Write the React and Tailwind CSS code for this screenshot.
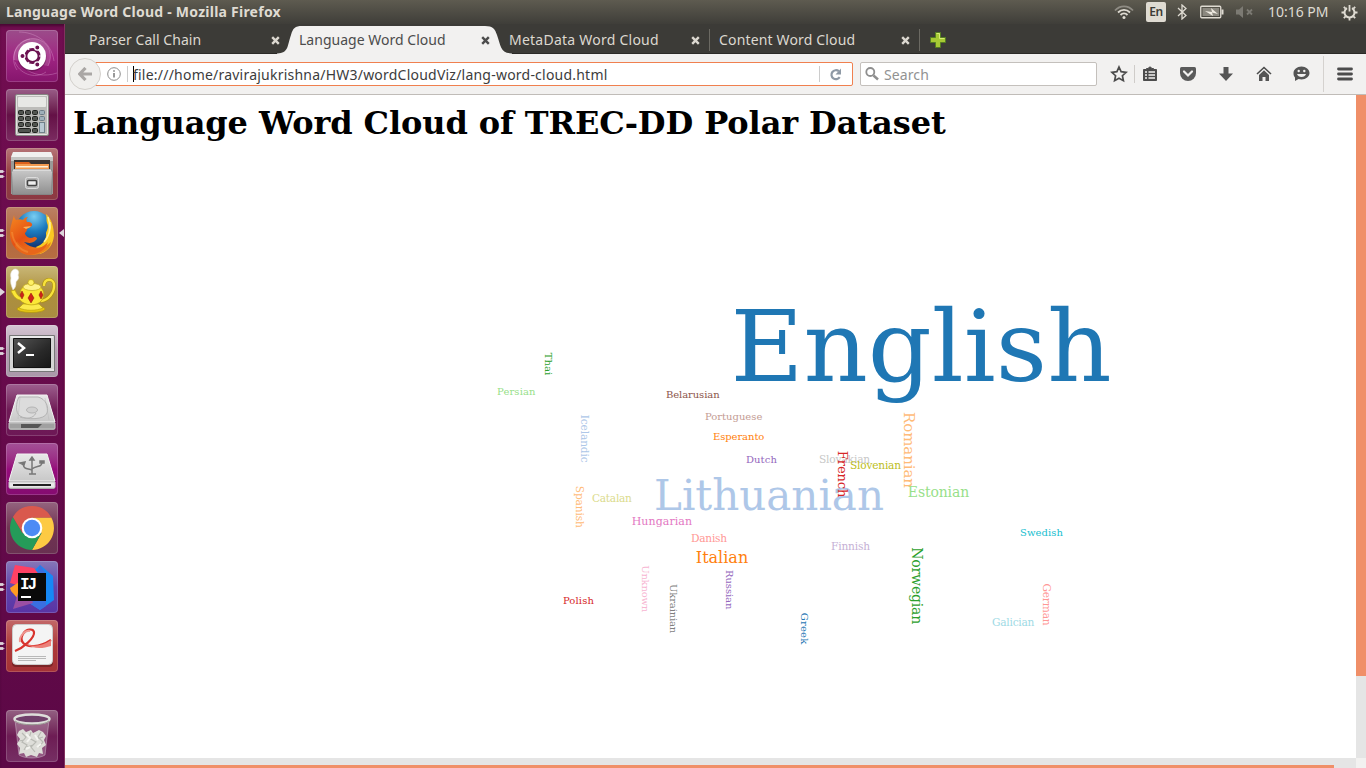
import React from "react";

const words = [
  ["English", 921, 381, 100, "#1f77b4"],
  ["Lithuanian", 769, 510, 42, "#aec7e8"],
  ["Italian", 722, 563, 16, "#ff7f0e"],
];

// text, start x, baseline y, length, size, colour
const flat = [
  ["Estonian", 907.8, 497, 61.4, 14, "#98df8a"],
  ["Hungarian", 631.7, 525, 60.4, 11, "#e377c2"],
  ["Persian", 497, 395, 38.5, 10, "#98df8a"],
  ["Belarusian", 665.9, 398, 53.7, 10, "#8c564b"],
  ["Portuguese", 705, 420, 57.3, 10, "#c49c94"],
  ["Esperanto", 712.9, 440, 51.5, 10, "#ff7f0e"],
  ["Dutch", 745.9, 463, 31, 10, "#9467bd"],
  ["Slovakian", 818.9, 463, 51.3, 10.6, "#c7c7c7"],
  ["Slovenian", 850, 469, 51, 10.6, "#bcbd22"],
  ["Catalan", 591.9, 502, 40, 10.6, "#dbdb8d"],
  ["Danish", 690.9, 542, 36.2, 10.6, "#ff9896"],
  ["Finnish", 831, 550, 39, 10.6, "#c5b0d5"],
  ["Swedish", 1020, 536, 43, 10, "#17becf"],
  ["Galician", 992, 626, 42.4, 10.6, "#9edae5"],
  ["Polish", 562.9, 604, 31, 10, "#d62728"],
];

// text, baseline x, start y, length, size, colour
const turned = [
  ["Norwegian", 912, 547.3, 77, 14, "#2ca02c"],
  ["Romanian", 904, 412, 76, 15, "#ffbb78"],
  ["French", 838, 450.8, 46.6, 13, "#d62728"],
  ["Thai", 545, 352.8, 22.4, 10, "#2ca02c"],
  ["Icelandic", 581, 414.7, 48, 10.6, "#aec7e8"],
  ["Spanish", 576, 485.8, 42, 10.6, "#ffbb78"],
  ["Unknown", 642, 565.2, 47, 10, "#f7b6d2"],
  ["Ukrainian", 670, 584, 49.3, 10, "#7f7f7f"],
  ["Russian", 726, 570, 39.4, 10, "#9467bd"],
  ["Greek", 801, 612.8, 31.4, 10, "#1f77b4"],
  ["German", 1043, 583.4, 42.3, 10.6, "#ff9896"],
];

function WordCloud() {
  return (
    <svg viewBox="65 142 1291 616" width="1291" height="616" className="block shrink-0" fontFamily="'DejaVu Serif', serif">
      {words.map(([t, x, y, s, c]) => (
        <text key={t} x={x} y={y} fontSize={s} fill={c} textAnchor="middle">{t}</text>
      ))}
      {flat.map(([t, x, y, l, s, c]) => (
        <text key={t} x={x} y={y} fontSize={s} fill={c} textLength={l}>{t}</text>
      ))}
      {turned.map(([t, x, y, l, s, c]) => (
        <text key={t} transform={`translate(${x},${y}) rotate(90)`} fontSize={s} fill={c} textLength={l}>{t}</text>
      ))}
    </svg>
  );
}

const Svg = ({ w, h, children, className = "" }) => (
  <svg width={w} height={h} viewBox={`0 0 ${w} ${h}`} className={`block shrink-0 ${className}`} fill="none">{children}</svg>
);

function DashArt() {
  return (
    <Svg w={52} h={52}>
      <path d="M8 30C6 14 22 5 34 10c10 4 13 16 8 26" fill="#fff" fillOpacity=".14" stroke="#e6a8d8" strokeOpacity=".35" />
      <path d="M11 40C3 28 10 12 24 9M40 42c-12 8-27 1-31-10M13 2c14 0 32 8 35 29M51 43c-12 4-25 2-32-5" stroke="#f0b8e4" strokeOpacity=".3" />
      <circle cx="26" cy="27" r="14.500" fill="#400830" fillOpacity=".35" />
      <circle cx="26" cy="26" r="14" fill="#fff" />
      <circle cx="26.500" cy="26" r="6.600" stroke="#6b1150" strokeWidth="3" />
      <g stroke="#fff" strokeWidth="1.200"><path d="M33 26h4M23 20l-2-4M23 32l-2 4" />
        <circle cx="16.500" cy="26" r="2.600" fill="#6b1150" /><circle cx="31.300" cy="17.600" r="2.600" fill="#6b1150" /><circle cx="31.300" cy="34.400" r="2.600" fill="#6b1150" /></g>
    </Svg>
  );
}

function CalcArt() {
  const keys = [];
  for (let r = 0; r < 4; r++)
    for (let c = 0; c < 4; c++) {
      if (r === 3 && c > 0 && c !== 2) continue;
      if (r === 2 && c === 3) continue;
      const wide = r === 3 && c === 0;
      keys.push(<rect key={`${r}${c}`} x={12.5 + c * 7} y={21.5 + r * 6} width={wide ? 12 : 5} height="4" rx="1" fill={c === 3 ? "#9eb0ba" : "#50544f"} stroke={c === 3 ? "#6c7c86" : "#20221f"} />);
    }
  return (
    <Svg w={52} h={52}>
      <rect x="9.5" y="5.5" width="33" height="41" rx="1.5" fill="#bcbcb9" stroke="#878783" />
      <rect x="10.5" y="6.5" width="31" height="39" rx="1" stroke="#eee" strokeOpacity=".8" />
      <rect x="12" y="8" width="28" height="10" rx="1" fill="#e7e8e5" />
      {keys}
      <rect x="33.5" y="33.5" width="5" height="10" fill="#b8c8d2" stroke="#70808a" />
    </Svg>
  );
}

function FilesArt() {
  return (
    <Svg w={52} h={52}>
      <defs><linearGradient id="cab" x1="0" y1="0" x2="0" y2="1"><stop stopColor="#c9c9c9" /><stop offset="1" stopColor="#8f8f8f" /></linearGradient></defs>
      <path d="M7 4h38l2 6v36H5V10z" fill="#9a9a98" /><path d="M7 4h38l2 5H5z" fill="#f1f1f0" /><path d="M5 9h42v4H5z" fill="#c4c4c2" />
      <path d="M8 12h36v10H8z" fill="#3a3330" />
      <path d="M9 14h14l2 2h18v5H9z" fill="#dc611c" /><path d="M9 16h34v5H9z" fill="#f39a4f" /><path d="M10 18h32v1.400H10z" fill="#fff1d8" />
      <path d="M6.500 21.500h39l1 3-1 22h-39l-1-22z" fill="url(#cab)" stroke="#858585" />
      <path d="M7 22h38" stroke="#eee" />
      <rect x="19.500" y="29.500" width="13" height="11" rx="2" fill="#b5b5b5" stroke="#ddd" /><rect x="21.500" y="32.500" width="9" height="5" rx="1" fill="#eee" stroke="#444" strokeWidth="1.500" />
    </Svg>
  );
}

function FirefoxArt() {
  return (
    <Svg w={52} h={52}>
      <defs>
        <radialGradient id="globe" cx=".5" cy=".15" r=".8"><stop stopColor="#79cdf1" /><stop offset=".5" stopColor="#1c7cc0" /><stop offset="1" stopColor="#123a78" /></radialGradient>
        <linearGradient id="fox" x1="0" y1="0" x2=".8" y2="1"><stop stopColor="#f58a20" /><stop offset=".5" stopColor="#e55014" /><stop offset="1" stopColor="#ef8a1d" /></linearGradient>
      </defs>
      <circle cx="28" cy="22.500" r="18.500" fill="url(#globe)" />
      <path d="M40 7c1 4 0 6 1 9 2 4 0 7-1 10 1 7-4 12-10 14l4 7c9-3 13-10 14-18 0-8-2-17-8-22z" fill="#f9c922" />
      <path d="M42 10c3 8 2 18-3 24M44 15c1 8-1 14-6 20" stroke="#fff19a" strokeWidth="1.500" />
      <path d="M8 8c0 2 1 4 2 5 3-1 5-1 7 0 1-2 3-3 5-3-2 2-2 3-1 5 2 0 4 0 5 2 1 2-3 4-5 5 0 3-2 3-2 5 2 4 6 5 9 3 3 0 4 2 2 3-4 4-8 3-12 2 8 8 20 7 27 0-1 8-10 13-19 13C12 48 4 38 4 27c0-8 3-14 4-19z" fill="url(#fox)" />
      <path d="M11 34c7 10 21 12 31 1-2 8-11 13-20 13-6-1-11-5-13-9z" fill="#e8661a" />
      <path d="M17 20c3 0 6-1 8-1-1 2-4 2-5 3z" fill="#f8b35b" />
      <path d="M6 25c1 11 8 18 16 20" stroke="#f7973d" strokeWidth="2" strokeOpacity=".5" />
    </Svg>
  );
}

function TeapotArt() {
  return (
    <Svg w={52} h={52}>
      <path d="M7 24c-2-5-3-8-2-12-1-4 0-8 4-9 3 0 5 3 3 6 2 4-1 5-2 7 0 3 0 5-3 8z" fill="#fff" stroke="#e4e0d4" strokeWidth=".6" />
      <path d="M38 20c0-8 9-8 10-2 1 9-6 16-13 17" stroke="#ad920c" strokeWidth="3.600" /><path d="M38 20c0-8 9-8 10-2 1 9-6 16-13 17" stroke="#f8e23b" strokeWidth="2.400" />
      <ellipse cx="25" cy="43" rx="14" ry="3.500" fill="#e6c714" stroke="#b0960e" strokeWidth=".7" />
      <path d="M17 38h16l4 4c-7 3-17 3-24 0z" fill="#fbe94c" stroke="#bfa510" strokeWidth=".7" />
      <path d="M5 25l4-1c2 5 4 7 6 7-2-7 1-10 5-11h13c5 3 6 9 3 14-5 7-17 6-22 0-5-1-7-5-9-9z" fill="#fbe737" stroke="#bfa510" strokeWidth=".7" />
      <ellipse cx="26" cy="21" rx="9" ry="3.500" fill="#fff28a" stroke="#c6ad18" strokeWidth=".7" /><circle cx="25" cy="16.500" r="3" fill="#fff065" stroke="#bfa510" strokeWidth=".7" />
      <path d="M16 25l2 4-2 4-2-4zM25 27l3 5-3 5-3-5zM35 25l2 4-2 4-2-4z" fill="#cf2418" stroke="#8a180c" strokeWidth=".5" />
    </Svg>
  );
}

function TerminalArt() {
  return (
    <Svg w={52} h={52}>
      <defs><linearGradient id="term" x1="0" y1="0" x2="1" y2="1"><stop stopColor="#555" /><stop offset=".6" stopColor="#292929" /><stop offset="1" stopColor="#171717" /></linearGradient></defs>
      <path d="M3.500 10.500h45v36h-45z" fill="#d5d5d5" stroke="#777" /><path d="M5 12h42" stroke="#fff" />
      <path d="M7.500 13.500h37v29h-37z" fill="url(#term)" stroke="#111" />
      <path d="M4 45h44" stroke="#f4f4f4" />
      <path d="M12 18l6 5-6 5" stroke="#fff" strokeWidth="2.500" /><path d="M20 30h8" stroke="#fff" strokeWidth="2" />
    </Svg>
  );
}

function DriveArt({ usb = false }) {
  return (
    <Svg w={52} h={52}>
      <defs><linearGradient id="drv" x1="0" y1="0" x2="0" y2="1"><stop stopColor="#e8e8e8" /><stop offset="1" stopColor="#c8c8c8" /></linearGradient></defs>
      <path d="M11 11h30l8 27v6q0 2-2 2H5q-2 0-2-2v-6z" fill="#939393" />
      <path d="M11 11h30l8 27H3z" fill="url(#drv)" stroke="#f2f2f2" />
      {usb ? (
        <g stroke="#777" strokeWidth="1.500"><path d="M26 15v16M17 21c1 6 5 4 9 6M36 19c0 6-6 3-10 7M23 31h7" /><path d="M24 17l2-3 2 3zM14 20l5-1-1 3zM34 18h4v2h-4z" fill="#777" /></g>
      ) : (
        <g stroke="#b4b4b4"><path d="M13 13h19c8 2 11 10 9 16-2 7-21 7-27 3-5-3-4-14-1-19z" fill="#dcdcdc" /><ellipse cx="26" cy="26" rx="5.500" ry="3" fill="#d0d0d0" /><path d="M30 29c-3 6-10 6-16 4" /><path d="M12 35l2-22M39 14l4 22" strokeOpacity=".4" /></g>
      )}
      <path d="M3 39h46v5q0 1-1 1H4q-1 0-1-1z" fill={usb ? "#e8e8e8" : "#a0a0a0"} stroke="#c5c5c5" />
      {usb ? <path d="M7 41h38v2H7z" fill="#222" /> : <path d="M15 40h21l-4 4H15z" fill="#555" />}
    </Svg>
  );
}

function ChromeArt() {
  return (
    <Svg w={52} h={52}>
      <path d="M26 15.500h19.300A22 22 0 0 1 26 48l9.500-17z" fill="#fdca43" />
      <path d="M16.500 31L6.950 15A22 22 0 0 0 26 48l9.500-17z" fill="#259b59" />
      <path d="M26 15.500h19.300A22 22 0 0 0 6.950 15l9.550 16z" fill="#d9594d" />
      <circle cx="26" cy="26" r="10.300" fill="#fff" /><circle cx="26" cy="26" r="8.200" fill="#4c8bf5" />
    </Svg>
  );
}

function IdeaArt() {
  return (
    <Svg w={52} h={52}>
      <path d="M34 4l13 11 1 24-14 10-14-9 2-24z" fill="#1688f5" /><path d="M34 4l6 9v32l-6 4-14-9 14-36z" fill="#3a6fe0" />
      <path d="M9 4l19 3 6 8-12 12-18-5z" fill="#ff4164" /><path d="M4 27l9-6v18L5 30z" fill="#ff9b22" />
      <path d="M12 32l-5 16 20-6-4-10z" fill="#9a4fa4" />
      <path d="M12 12h28v28H12z" fill="#0a0a0a" /><path d="M15 35h10v2H15z" fill="#fff" />
      <text x="14" y="28" fontFamily="'Liberation Mono', monospace" fontWeight="700" fontSize="16" textLength="17" fill="#fff">IJ</text>
    </Svg>
  );
}

function ReaderArt() {
  return (
    <Svg w={52} h={52}>
      <rect x="6" y="5" width="41" height="42" rx="4" fill="#5e1c1c" fillOpacity=".6" />
      <rect x="6.500" y="4.500" width="40" height="40" rx="4" fill="#f4f4f4" stroke="#ccc" />
      <path d="M9 31c8-3 20-13 19-19-1-4-8-3-11 2-4 7 1 13 11 12 6 0 11-2 17-6" stroke="#d8342e" strokeWidth="2.200" />
      <path d="M20 24c8 3 17 2 25-4v6c-9 3-18 3-25-2z" fill="#ec8079" /><path d="M14 22c-1-6 5-12 10-11" stroke="#ee9791" strokeWidth="2" />
      <path d="M12 36.500h28M12 38.500h28M12 40.500h18" stroke="#aaa" strokeWidth=".8" />
    </Svg>
  );
}

function TrashArt() {
  return (
    <Svg w={52} h={52}>
      <path d="M9 10l4 35c6 4 20 4 26 0l4-35z" fill="#d9c6d4" fillOpacity=".3" stroke="#d9ccd7" strokeOpacity=".45" />
      <path d="M13 21l4-2 3 3 5-2 2 3 6-3 4 2 3 4-2 4 2 5-4 3 1 6-4-1-2 4-6-2-5 2-2-4-5 1 1-6-3-4 3-5-3-4z" fill="#deded9" />
      <path d="M16 23l4 4-4 5 5 3-3 5M25 22l-2 6 7 4-5 5 4 5M35 22l-3 5 5 5-4 5M13 31l5-1M21 37l6-2M31 29l6-2" stroke="#b9bab4" strokeWidth="1.200" />
      <path d="M20 24l4 4-3 4M29 25l3 5M35 34l-4 3M20 39l4-2" stroke="#f4f4f0" strokeWidth="2" />
      <ellipse cx="26" cy="9" rx="17.500" ry="4.500" fill="#71406a" stroke="#dededa" strokeWidth="2.500" />
      <path d="M9 11c5 5 29 5 34 0" stroke="#979790" />
    </Svg>
  );
}

const tiles = [
  { bg: "from-[#9b4c8a] via-[#a02583] to-[#86156d]", art: <DashArt /> },
  { bg: "from-[#995d88] via-[#641046] to-[#7b2b61]", art: <CalcArt /> },
  { bg: "from-[#b57578] via-[#963b40] to-[#8b3943]", art: <FilesArt />, left: 2 },
  { bg: "from-[#bb8164] via-[#b36840] to-[#b66e42]", art: <FirefoxArt />, left: 2, right: true },
  { bg: "from-[#c9b777] via-[#ad903c] to-[#a98c42]", art: <TeapotArt />, left: 1 },
  { bg: "from-[#d5c6d3] via-[#b4a0b1] to-[#aa98a9]", art: <TerminalArt />, left: 2 },
  { bg: "from-[#9d5f8f] via-[#701b57] to-[#6d1856]", art: <DriveArt /> },
  { bg: "from-[#a35096] via-[#960c7c] to-[#850c70]", art: <DriveArt usb /> },
  { bg: "from-[#94647f] via-[#713453] to-[#693051]", art: <ChromeArt /> },
  { bg: "from-[#8777b8] via-[#6244ac] to-[#5934a5]", art: <IdeaArt />, left: 2 },
  { bg: "from-[#c26869] via-[#ad3939] to-[#a43236]", art: <ReaderArt />, left: 2 },
];

function Tile({ bg, art, left, right }) {
  return (
    <div className="relative h-[52px] w-[52px] shrink-0">
      <div className={`h-[52px] w-[52px] overflow-hidden rounded-[4px] bg-linear-to-b ${bg} shadow-[inset_0_0_0_1px_rgba(255,255,255,0.17)]`}>{art}</div>
      {left === 2 && (
        <Svg w={6} h={8} className="absolute -left-[6px] top-[22px]"><path d="M0 .5h3l1 1-1 1H0zM0 5.500h3l1 1-1 1H0z" fill="#ddd5db" stroke="#ddd5db" strokeWidth=".8" /></Svg>
      )}
      {left === 1 && (
        <Svg w={5} h={8} className="absolute -left-[6px] top-[22px]"><path d="M0 0l5 4-5 4z" fill="#ddd5db" /></Svg>
      )}
      {right && (
        <Svg w={5} h={8} className="absolute -right-[6px] top-[22px]"><path d="M5 0v8L0 4z" fill="#ddd5db" /></Svg>
      )}
    </div>
  );
}

function Launcher() {
  return (
    <aside className="flex w-[65px] shrink-0 flex-col border-r border-[#82315f] bg-linear-to-b from-[#710d50] to-[#5c0846] pb-[6px] pl-[6px] pt-[6px] shadow-[inset_0_3px_3px_-1px_rgba(30,0,20,0.5)]">
      <div className="flex flex-1 flex-col gap-[7px]">
        {tiles.map((t, i) => <Tile key={i} {...t} />)}
      </div>
      <Tile bg="from-[#936082] via-[#6d1c54] to-[#762f64]" art={<TrashArt />} />
    </aside>
  );
}

function TopBar() {
  return (
    <header className="flex h-6 shrink-0 items-center justify-between bg-linear-to-b from-[#5e5b50] to-[#3f3e39] text-[#dfdbd2]">
      <span className="whitespace-nowrap pl-[6px] font-['Noto_Sans',sans-serif] text-[14px] font-bold leading-6 tracking-[0.24px]">Language Word Cloud - Mozilla Firefox</span>
      <div className="flex items-center pr-[8px]">
        <Svg w={20} h={16}>
          <path d="M1 6.500C6 1 14 1 19 6.500" stroke="#8f8c84" strokeWidth="1.800" />
          <path d="M4 8.500c3.500-3.500 8.500-3.500 12 0M6.500 11c2-2 5-2 7 0" stroke="#dfdbd2" strokeWidth="1.800" /><circle cx="10" cy="13.500" r="1.500" fill="#dfdbd2" />
        </Svg>
        <span className="ml-[12px] flex h-5 w-5 items-center justify-center rounded-[2px] bg-[#dfdbd2] font-['Noto_Sans',sans-serif] text-[12px] font-semibold leading-none tracking-[-0.5px] text-[#3c3b37]">En</span>
        <Svg w={10} h={16} className="ml-[11px]"><path d="M1 4l8 7.500L5 15V1l4 3.500L1 12" stroke="#dfdbd2" strokeWidth="1.300" /></Svg>
        <Svg w={24} h={14} className="ml-[13px]"><rect x=".75" y="1.250" width="20" height="11.500" rx="1" stroke="#dfdbd2" strokeWidth="1.300" /><rect x="2.500" y="3" width="16.500" height="8" fill="#8b887f" /><path d="M22.500 4.500v5" stroke="#dfdbd2" strokeWidth="2" /><path d="M5 6l7 1-1-4 7 6-6-1.500L13 11z" fill="#eeeae1" /></Svg>
        <Svg w={18} h={14} className="ml-[12px]"><path d="M0 4.500h3L7 1v12L3 9.500H0z" fill="#7c7a73" /><path d="M11 4.500l5 5M16 4.500l-5 5" stroke="#7c7a73" strokeWidth="1.800" /></Svg>
        <span className="ml-[14px] w-[62px] whitespace-nowrap font-['Noto_Sans',sans-serif] text-[14px] leading-6 tracking-[-0.02px]">10:16 PM</span>
        <Svg w={17} h={17} className="ml-[11px]">
          <path d="M6 4.200a5 5 0 1 0 5 0" stroke="#dfdbd2" strokeWidth="2" /><path d="M8.500 1v6.500M.5 8.500h2.500M14 8.500h2.500M2.800 2.800l1.800 1.800M14.200 2.800l-1.800 1.800M2.800 14.200l1.800-1.800M14.200 14.200l-1.800-1.800M8.500 14v2.500" stroke="#dfdbd2" strokeWidth="1.800" />
        </Svg>
      </div>
    </header>
  );
}

function Tab({ label, spacing, active, divider }) {
  return (
    <div className={`relative flex h-[29px] w-[210px] shrink-0 items-center ${active ? "text-[#4c4c4c]" : "text-[#dcd8d0]"}`}>
      {active && (
        <Svg w={236} h={30} className="absolute -left-[13px] top-0">
          <path d="M0 29.500C12 29 10 22 14 11 16 4 18 2 25 2H208c8 0 10 3 12 9 4 11 3 18 15 18.500V30H0z" fill="#f2f1f0" />
        </Svg>
      )}
      <span className={`relative ml-[9px] flex-1 whitespace-nowrap pt-[3px] font-['Noto_Sans',sans-serif] text-[14px] leading-5 ${spacing}`}>{label}</span>
      <Svg w={9} h={9} className="relative mr-[10px] mt-[3px]"><path d="M1.200 1.200l6.600 6.600M7.800 1.200L1.200 7.800" stroke={active ? "#4c4c4c" : "#dcd8d0"} strokeWidth="2.400" /></Svg>
      {divider && <span className="absolute right-0 top-[5px] h-[22px] w-px bg-[#6b6962]" />}
    </div>
  );
}

function TabBar() {
  return (
    <div className="flex h-[30px] shrink-0 border-b border-[#2b2a27] bg-[#3c3b37] pl-[15px]">
      <Tab label="Parser Call Chain" spacing="tracking-[0.05px]" />
      <Tab label="Language Word Cloud" spacing="tracking-[0.02px]" active />
      <Tab label="MetaData Word Cloud" spacing="tracking-[0.24px]" divider />
      <Tab label="Content Word Cloud" spacing="tracking-[0.16px]" divider />
      <Svg w={16} h={16} className="ml-[10px] mt-[8px]"><path d="M5.500.5h5v5h5v5h-5v5h-5v-5h-5v-5h5z" fill="#a7c934" stroke="#557d22" /><path d="M6.500 1.500h3v5h5" stroke="#d7eb75" /></Svg>
    </div>
  );
}

function NavBar() {
  return (
    <div className="flex h-[41px] shrink-0 items-center border-b border-[#c0bcb8] bg-[#f2f1f0] pl-1">
      <div className="z-10 flex h-8 w-8 shrink-0 items-center justify-center rounded-full border border-[#d3d0cc] bg-[#f0efed]">
        <Svg w={14} h={14}><path d="M7.500 1L1.700 7l5.800 6M2 7h12" stroke="#aaa7a5" strokeWidth="3.200" /></Svg>
      </div>
      <div className="-ml-[6px] flex h-6 w-[758px] shrink-0 items-center rounded-r-[2px] border border-[#f0804f] bg-white">
        <Svg w={14} h={14} className="ml-[11px]"><circle cx="7" cy="7" r="6.300" stroke="#8c8c8c" /><path d="M7 6v4.500M7 3.300v1.500" stroke="#777" strokeWidth="1.500" /></Svg>
        <span className="ml-[6px] h-4 w-px bg-[#ccc]" />
        <span className="ml-[5px] h-4 w-px bg-black" />
        <span className="-ml-px flex-1 whitespace-nowrap pt-[2px] font-['Noto_Sans',sans-serif] text-[14px] leading-5 tracking-[0.22px] text-[#3c3c3c]">file:///home/ravirajukrishna/HW3/wordCloudViz/lang-word-cloud.html</span>
        <span className="h-4 w-px bg-[#ccc]" />
        <Svg w={13} h={13} className="ml-[9px] mr-[10px]"><path d="M9.800 3.200a4.500 4.500 0 1 0 .9 6" stroke="#8e99a5" strokeWidth="2.200" /><path d="M12 .5v6H6.500z" fill="#8e99a5" /></Svg>
      </div>
      <div className="ml-[7px] flex h-6 w-[237px] shrink-0 items-center rounded-[2px] border border-[#c4c0bc] bg-white">
        <Svg w={14} h={14} className="ml-1"><circle cx="5.300" cy="5" r="4" stroke="#8e8e8e" strokeWidth="1.800" /><path d="M8.500 8.500l4.500 4" stroke="#8e8e8e" strokeWidth="2.500" /></Svg>
        <span className="ml-[5px] pt-[2px] font-['Noto_Sans',sans-serif] text-[14px] leading-5 tracking-[0.1px] text-[#929292]">Search</span>
      </div>
      <Svg w={18} h={18} className="ml-[13px]"><path d="M9 2l2.100 4.700 5 .6-3.700 3.400 1 5L9 13.200l-4.400 2.500 1-5-3.700-3.400 5-.6z" stroke="#4c4c4c" strokeWidth="1.700" /></Svg>
      <span className="ml-[6px] h-[18px] w-px bg-[#cfccc9]" />
      <Svg w={16} h={16} className="ml-[7px]"><path d="M1.500 3.500h3v-1h2q0-1.500 1.500-1.500t1.500 1.500h2v1h3v11h-13z" fill="#4c4c4c" stroke="#4c4c4c" /><path d="M3 6h2M3 9h2M3 12h2M6.500 6H13M6.500 9H13M6.500 12H13" stroke="#f2f1f0" strokeWidth="1.600" /></Svg>
      <Svg w={16} h={16} className="ml-[22px]"><path d="M1.500 1h13q1.500 0 1.500 1.500V7a8 8 0 0 1-16 0V2.500Q0 1 1.500 1z" fill="#5a5a5a" /><path d="M4 5.500l4 4 4-4" stroke="#f2f1f0" strokeWidth="2.200" strokeLinecap="round" /></Svg>
      <Svg w={16} h={16} className="ml-[22px]"><path d="M5.500 1h5v6.500H15L8 15 1 7.500h4.500z" fill="#555" /></Svg>
      <Svg w={16} h={16} className="ml-[22px]"><path d="M1 8l7-6.500L15 8" stroke="#4c4c4c" strokeWidth="1.600" /><path d="M3 9l5-4.700L13 9v6H9.500v-4h-3v4H3z" fill="#555" /></Svg>
      <Svg w={17} h={16} className="ml-[21px]"><path d="M8.500.5c4.500 0 8 3 8 6.500s-3.500 6.500-8 6.500c-1 0-2 0-3-.4L2 15v-3.500C.8 10.300.5 9 .5 7c0-3.500 3.500-6.500 8-6.500z" fill="#555" /><circle cx="5.700" cy="5" r="1.200" fill="#f2f1f0" /><circle cx="11.300" cy="5" r="1.200" fill="#f2f1f0" /><path d="M4 8h9c-1 4-8 4-9 0z" fill="#f2f1f0" /></Svg>
      <span className="ml-[13px] h-9 w-px bg-[#d5d2cf]" />
      <Svg w={16} h={14} className="ml-[13px]"><path d="M1.500 2h13M1.500 7h13M1.500 12h13" stroke="#4c4c4c" strokeWidth="2.800" strokeLinecap="round" /></Svg>
    </div>
  );
}

export default function App() {
  return (
    <div className="flex h-[768px] w-[1366px] flex-col overflow-hidden bg-white">
      <TopBar />
      <div className="flex min-h-0 flex-1">
        <Launcher />
        <div className="flex min-w-0 flex-1 flex-col">
          <TabBar />
          <NavBar />
          <div className="flex min-h-0 flex-1">
            <main className="flex w-[1291px] flex-col overflow-hidden bg-white pt-[10px]">
              <h1 className="h-[37px] shrink-0 whitespace-nowrap pl-2 font-['DejaVu_Serif',serif] text-[32px] font-bold leading-[37px] tracking-[-0.09px] text-black">Language Word Cloud of TREC-DD Polar Dataset</h1>
              <WordCloud />
            </main>
            <div className="w-[10px] bg-[#e5e5e5]"><div className="h-[581px] bg-[#f08f68]" /></div>
          </div>
          <div className="flex h-[10px] shrink-0 bg-[#f2f1f0]">
            <div className="w-[1291px] bg-[#e5e5e5] pt-[7px]"><div className="h-[3px] w-[1269px] bg-[#f08f68]" /></div>
          </div>
        </div>
      </div>
    </div>
  );
}
